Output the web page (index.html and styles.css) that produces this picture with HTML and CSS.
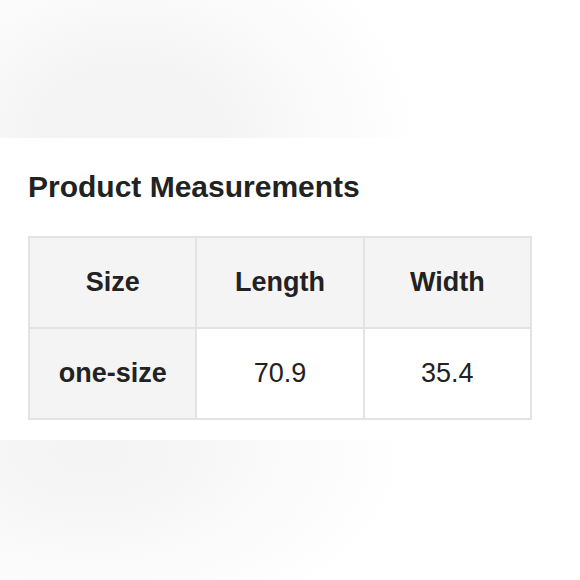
FILE: index.html
```html
<!DOCTYPE html>
<html>
<head>
<meta charset="utf-8">
<link rel="stylesheet" href="styles.css">
</head>
<body>
<div class="band band-top"></div>
<section class="content">
  <h2 class="title">Product Measurements</h2>
  <table class="measure">
    <tr>
      <th>Size</th>
      <th>Length</th>
      <th>Width</th>
    </tr>
    <tr>
      <th>one-size</th>
      <td>70.9</td>
      <td>35.4</td>
    </tr>
  </table>
</section>
<div class="band band-bottom"></div>
</body>
</html>
```
FILE: styles.css
```css
html, body {
  margin: 0;
  padding: 0;
  background: #fff;
}
body {
  width: 580px;
  height: 580px;
  overflow: hidden;
  font-family: "Liberation Sans", Arial, sans-serif;
  color: #222;
}
.band {
  width: 580px;
}
.band-top {
  height: 138px;
  background:
    radial-gradient(ellipse 290px 230px at 130px 140px, #f3f3f3 0%, #f4f4f4 30%, #fafafa 65%, rgba(255,255,255,0) 100%),
    #fff;
}
.band-bottom {
  height: 140px;
  margin-top: 2px;
  background:
    radial-gradient(ellipse 320px 190px at 90px 10px, #f4f4f4 0%, #f6f6f6 30%, #fbfbfb 65%, rgba(255,255,255,0) 100%),
    #fff;
}
.content {
  height: 300px;
  padding: 32px 28px 0;
  box-sizing: border-box;
}
.title {
  margin: 0 0 32px;
  font-size: 30px;
  line-height: 34px;
  font-weight: bold;
  color: #222;
}
.measure {
  width: 504px;
  border-collapse: collapse;
  table-layout: fixed;
}
.measure th, .measure td {
  border: 2px solid #e3e3e3;
  height: 89px;
  padding: 0;
  text-align: center;
  vertical-align: middle;
  font-size: 27px;
  color: #222;
}
.measure th {
  background: #f4f4f4;
  font-weight: bold;
}
.measure td {
  background: #fff;
  font-weight: normal;
}
```
